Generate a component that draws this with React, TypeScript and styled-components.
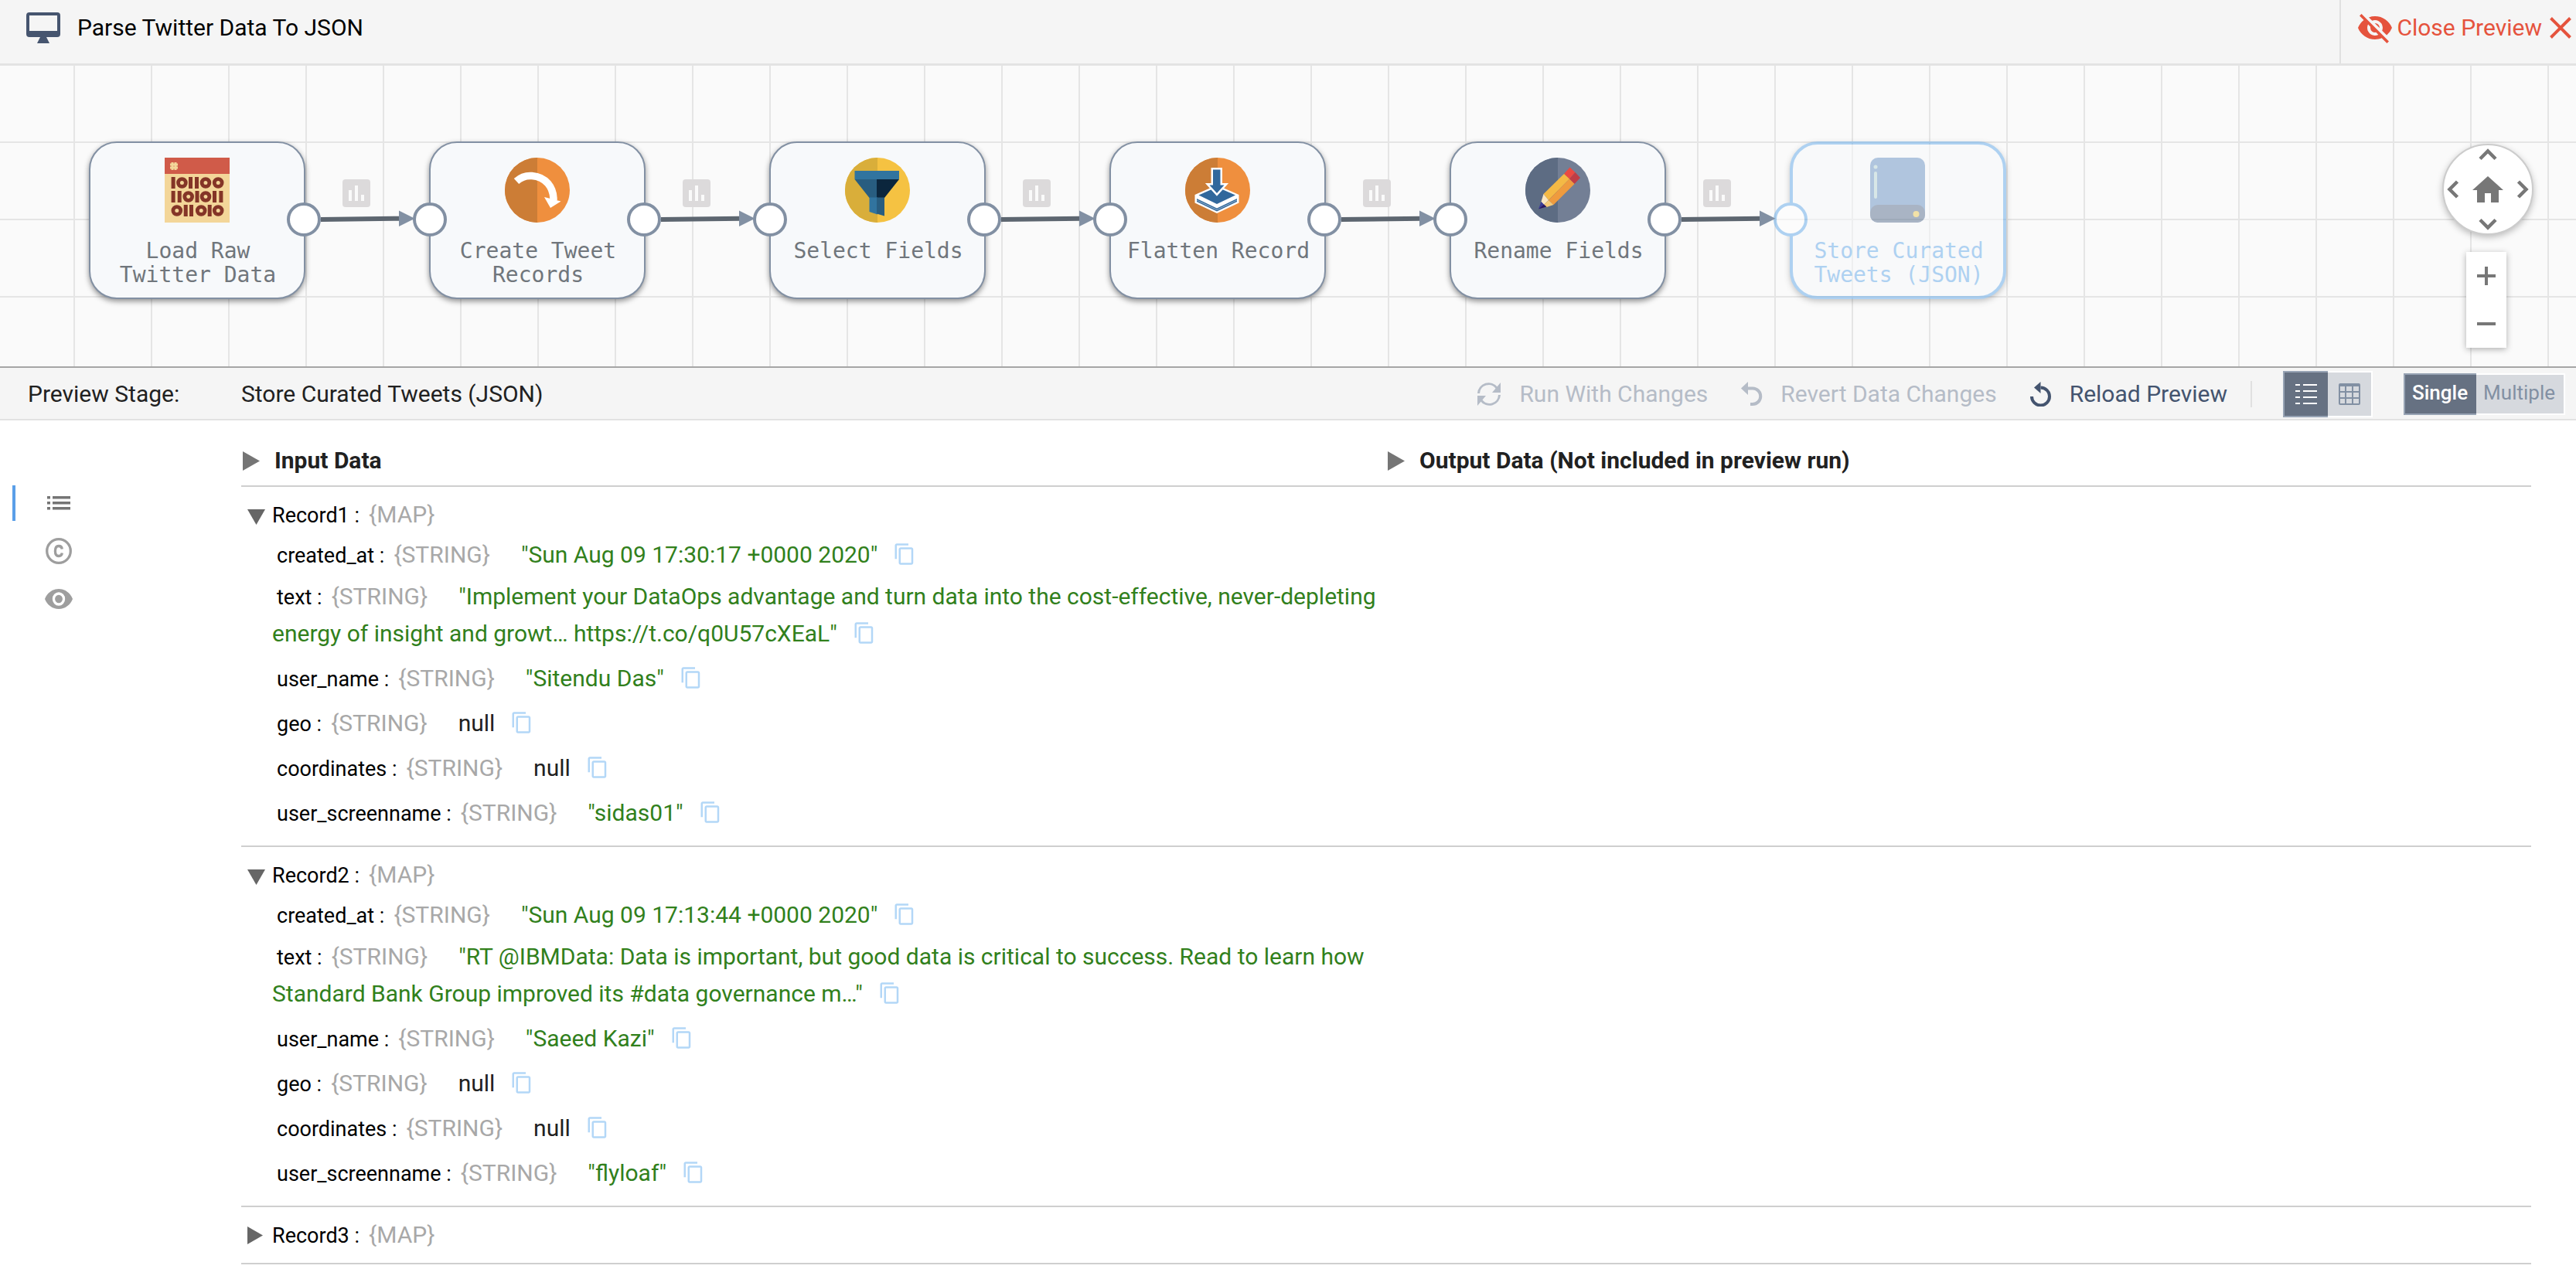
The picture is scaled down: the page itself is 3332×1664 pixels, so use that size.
import React, { useState } from "react";
import styled, { createGlobalStyle, css } from "styled-components";

const GlobalStyle = createGlobalStyle`
  *, *::before, *::after { box-sizing: border-box; }
  body {
    margin: 0;
    background: #fff;
    color: #212121;
    font-family: Roboto, "Liberation Sans", sans-serif;
    font-size: 30px;
    line-height: 40px;
  }
  button {
    margin: 0;
    padding: 0;
    border: 0;
    background: none;
    color: inherit;
    font: inherit;
    text-align: left;
    cursor: pointer;
  }
  svg { display: block; flex: none; }
`;

/* ---------- header ---------- */

const Header = styled.header`
  display: flex;
  justify-content: space-between;
  background: #f5f5f5;
  border-bottom: 3px solid #e3e3e3;
`;

const Title = styled.h1`
  display: flex;
  align-items: flex-start;
  gap: 22px;
  margin: 0;
  padding: 16px 0 26px 34px;
  color: #000;
  font-size: 30px;
  font-weight: 400;
`;

const CloseButton = styled.button`
  display: flex;
  align-items: flex-start;
  gap: 4px;
  padding: 16px 6px 26px 20px;
  border-left: 2px solid #e0e0e0;
  color: #e5533d;

  svg:first-child { margin: -4px 0; }
  svg:last-child { margin: 6px 0 0 6px; }
`;

/* ---------- canvas ---------- */

const Canvas = styled.section`
  position: relative;
  height: 389px;
  background-color: #fafafa;
  background-image:
    linear-gradient(to right, #e5e5e5 2px, transparent 2px),
    linear-gradient(to bottom, #e5e5e5 2px, transparent 2px);
  background-size: 100px 100px;
  background-position: 95px 98px;
  overflow: hidden;
`;

const StageNode = styled.div<{ $selected?: boolean }>`
  position: absolute;
  top: 98px;
  width: 280px;
  height: 204px;
  display: flex;
  flex-direction: column;
  align-items: center;
  gap: 21px;
  padding: ${(p) => (p.$selected ? "17px 10px 0" : "19px 12px 0")};
  border: ${(p) => (p.$selected ? "4px solid #64aaea" : "2px solid #8290a3")};
  border-radius: 36px;
  background: #f7f9fb;
  box-shadow: 0 3px 7px rgba(0, 0, 0, 0.42);
  color: ${(p) => (p.$selected ? "#64aaea" : "#70767c")};
  opacity: ${(p) => (p.$selected ? 0.5 : 1)};
`;

const StageLabel = styled.span`
  padding-left: 2px;
  font-family: "DejaVu Sans Mono", "Liberation Mono", monospace;
  font-size: 28px;
  line-height: 31px;
  text-align: center;
`;

const Port = styled.span<{ $side: "in" | "out"; $selected?: boolean }>`
  position: absolute;
  top: 50%;
  ${(p) => (p.$side === "in" ? css`left: ${p.$selected ? "-3px" : "-1px"};` : css`left: 100%;`)}
  width: 44px;
  height: 44px;
  margin: -23px 0 0 -22px;
  border: 4px solid ${(p) => (p.$selected ? "#64aaea" : "#8290a3")};
  border-radius: 50%;
  background: #fff;
`;

const Link = styled.svg`
  position: absolute;
  top: 147px;
`;

const Compass = styled.nav`
  position: absolute;
  top: 101px;
  right: 55px;
  width: 118px;
  height: 118px;
  display: grid;
  grid-template: 24px 1fr 24px / 24px 1fr 24px;
  place-items: center;
  border: 2px solid #ccc;
  border-radius: 50%;
  background: #fff;
  color: #777;
  box-shadow: 0 3px 9px rgba(0, 0, 0, 0.25);
`;

const CompassButton = styled.button<{ $area: string }>`
  grid-area: ${(p) => p.$area};
`;

const ZoomBox = styled.div`
  position: absolute;
  top: 241px;
  right: 90px;
  display: flex;
  flex-direction: column;
  background: #fff;
  color: #777;
  box-shadow: 0 2px 8px rgba(0, 0, 0, 0.3);
`;

const ZoomButton = styled.button`
  display: grid;
  place-items: center;
  width: 52px;
  height: 62px;
`;

/* ---------- preview bar ---------- */

const PreviewBar = styled.div`
  display: flex;
  align-items: center;
  height: 70px;
  padding: 2px 14px 0 0;
  background: #f5f5f5;
  border-top: 2px solid #a6a6a6;
  border-bottom: 2px solid #e2e2e2;
`;

const BarLabel = styled.span`
  width: 312px;
  padding-left: 36px;
`;

const BarActions = styled.div`
  display: flex;
  align-items: center;
  margin-left: auto;
`;

const Action = styled.button`
  display: flex;
  align-items: center;
  margin-right: 43px;
  gap: 23px;
  color: #44546f;

  &:disabled { color: #b5bcc7; cursor: default; }
`;

const BarDivider = styled.span`
  width: 2px;
  height: 34px;
  margin: 0 40px 0 -13px;
  background: #e0e0e0;
`;

const Toggle = styled.div`
  display: flex;
  & + & { margin-left: 40px; }
`;

const ToggleButton = styled.button<{ $active?: boolean; $text?: boolean }>`
  display: grid;
  place-items: center;
  height: ${(p) => (p.$text ? "54px" : "60px")};
  ${(p) => (p.$text ? css`padding: 0 11px 4px 9px;` : css`width: 58px;`)}
  border: 2px solid ${(p) => (p.$active ? "#97a3b4" : "#fff")};
  background: ${(p) => (p.$active ? "#667182" : "#d6d9de")};
  color: ${(p) => (p.$active ? "#fff" : "#8290a3")};
  font-size: 26px;
  font-weight: ${(p) => (p.$active ? 500 : 400)};

  &:first-child { border-right: 0; }
  &:last-child { border-left: 0; }
`;

/* ---------- preview body ---------- */

const PreviewBody = styled.main`
  display: flex;
  align-items: flex-start;
`;

const Rail = styled.nav`
  flex: none;
  display: flex;
  flex-direction: column;
  gap: 16px;
  width: 312px;
  padding: 84px 0 0 16px;
`;

const RailButton = styled.button<{ $active?: boolean }>`
  display: grid;
  place-items: center;
  width: 120px;
  height: 46px;
  padding-right: 4px;
  border-left: 4px solid ${(p) => (p.$active ? "#5a9fe8" : "transparent")};
  color: ${(p) => (p.$active ? "#757575" : "#9e9e9e")};
`;

const Data = styled.div`
  flex: 1;
  min-width: 0;
  margin-right: 58px;
  padding-top: 32px;
`;

const DataHeads = styled.div`
  display: grid;
  grid-template-columns: 1fr 1fr;
  padding-bottom: 12px;
  border-bottom: 2px solid #cfcfcf;
`;

const DataHead = styled.button`
  display: flex;
  align-items: center;
  gap: 19px;
  padding-left: 2px;
  font-weight: 700;

  svg { color: #757575; }
`;

const Record = styled.section`
  padding: 16px 0 10px;
  border-bottom: 2px solid #cfcfcf;
`;

const RecordHead = styled.button`
  display: flex;
  align-items: center;
  gap: 8px;
  margin-bottom: 6px;
  padding-left: 8px;

  svg { color: #666; }
`;

const Fields = styled.ul`
  width: 50%;
  margin: 0;
  padding: 0 0 0 40px;
  list-style: none;
  line-height: 44px;
`;

const Field = styled.li`
  margin-bottom: 10px;
  text-indent: 6px;
`;

const Name = styled.span`
  color: #000;
  font-size: 27px;
  line-height: 1;
`;

const Type = styled.span`
  margin-left: 12px;
  color: #a8a8a8;
`;

const Value = styled.span<{ $null: boolean }>`
  margin-left: 40px;
  color: ${(p) => (p.$null ? "#212121" : "#31801c")};
`;

const CopyButton = styled.button`
  display: inline-block;
  margin: 10px 0 0 20px;
  vertical-align: -4px;
  color: #b3d7f7;
  text-indent: 0;
`;

/* ---------- icons ---------- */

const MonitorIcon = () => (
  <svg width="44" height="40" viewBox="0 0 44 40" fill="#46556f">
    <path fillRule="evenodd" d="M4 0h36a4 4 0 0 1 4 4v24a4 4 0 0 1-4 4H4a4 4 0 0 1-4-4V4a4 4 0 0 1 4-4zM4 4v20h36V4z" />
    <path d="M18 32h8l4 8H14z" />
  </svg>
);

const EyeOffIcon = () => (
  <svg width="48" height="48" viewBox="0 0 24 24" fill="currentColor">
    <path d="M11.83 9L15 12.16V12a3 3 0 0 0-3-3zM7.53 9.8l1.55 1.55A3 3 0 0 0 9 12a3 3 0 0 0 3.65 2.92l1.55 1.55A5 5 0 0 1 7 12c0-.79.2-1.53.53-2.2zM2 4.27l2.28 2.28.45.45A11.8 11.8 0 0 0 1 12c1.73 4.39 6 7.5 11 7.5 1.55 0 3.03-.3 4.38-.84l.43.42L19.73 22 21 20.73 3.27 3zM12 7a5 5 0 0 1 4.64 6.82l2.93 2.93A11.8 11.8 0 0 0 23 12c-1.73-4.39-6-7.5-11-7.5-1.4 0-2.74.25-4 .7l2.17 2.15A5 5 0 0 1 12 7z" />
  </svg>
);

const CrossIcon = () => (
  <svg width="28" height="28" viewBox="0 0 28 28" stroke="currentColor" strokeWidth="4">
    <path d="M1.5 1.5l25 25M26.5 1.5l-25 25" />
  </svg>
);

const BinaryIcon = () => {
  const ones = [
    [8.6, 25], [31, 25], [39, 25],
    [8.6, 43], [16.7, 43], [39.5, 43], [62, 43], [70.4, 43],
    [24.7, 61], [32, 61], [55.7, 61],
  ];
  const zeros = [
    [22.4, 32.5], [53, 32.5], [69.2, 32.5],
    [30.7, 50.5], [53, 50.5],
    [15.8, 68.5], [47.2, 68.5], [69.2, 68.5],
  ];
  return (
    <svg width="84" height="84" viewBox="0 0 84 84">
      <rect width="84" height="84" fill="#f3d699" />
      <rect width="84" height="21" fill="#d05b49" />
      <path d="M10 6v10M14 6v10M7 9h10M7 13h10" stroke="#f3d699" strokeWidth="3" />
      {ones.map(([x, y]) => (
        <rect key={`${x}-${y}`} x={x} y={y} width="5" height="15" fill="#843527" />
      ))}
      {zeros.map(([x, y]) => (
        <circle key={`${x}-${y}`} cx={x} cy={y} r="4.9" fill="none" stroke="#843527" strokeWidth="4.8" />
      ))}
    </svg>
  );
};

const Disc = ({ left, right, children }: { left: string; right: string; children: React.ReactNode }) => (
  <svg width="84" height="84" viewBox="0 0 84 84">
    <circle cx="42" cy="42" r="42" fill={right} />
    <path d="M42 0a42 42 0 0 0 0 84z" fill={left} />
    {children}
  </svg>
);

const CreateIcon = () => (
  <Disc left="#cc7d36" right="#ef8f3e">
    <path d="M15 30.500C21 25 28 23 35 23.500C53 25 63 38 63 55" fill="none" stroke="#fff" strokeWidth="9.500" />
    <path d="M51 51l21.500 5.500L59 65z" fill="#fff" />
  </Disc>
);

const FunnelIcon = () => (
  <Disc left="#d9ae3a" right="#f5c242">
    <path d="M12.500 17h57.500v11H12.500z" fill="#31749f" />
    <path d="M12.500 28H42v24H31.500z" fill="#285d80" />
    <path d="M41 28h29L51 52H41z" fill="#0b263d" />
    <path d="M31.500 51.500H42v22l-10.500-3.500z" fill="#31749f" />
    <path d="M41 51.500h10v24l-10-3z" fill="#285d80" />
  </Disc>
);

const FlattenIcon = () => (
  <Disc left="#cc7d36" right="#ef8f3e">
    <path d="M41 35.500L12.500 48v10.500L41 72l28.500-13.500V48z" fill="#fff" />
    <path d="M17.500 48.500L41 38l24 10.500L41 60z" fill="#31689c" />
    <path d="M15 53l26 12.500L67 53v4L41 69.500 15 57z" fill="#31689c" />
    <path d="M15 55l26 12.500L67 55" fill="none" stroke="#fff" strokeWidth="1" opacity=".5" />
    <path d="M36 15.500h9.500v20h5L41 46l-9.500-10.500H36z" fill="#31689c" stroke="#fff" strokeWidth="5" paintOrder="stroke" />
  </Disc>
);

const PencilIcon = () => (
  <Disc left="#5d6c83" right="#737f95">
    <path d="M50 21l7.500-8.500L64.500 19 57 27.500z" fill="#ea4a42" />
    <path d="M64.500 19L71 26l-7.500 8-6.500-6.500z" fill="#bf3d45" />
    <path d="M50 21l7 6.500L30 55l-6.500-8z" fill="#f4b945" />
    <path d="M57 27.500l6.500 6.500-27 27L30 55z" fill="#ef9b3e" />
    <path d="M23.500 47L30 55l-6 6-3.500-4z" fill="#fbe6c0" />
    <path d="M30 55l6.500 6-9 3-3.500-3z" fill="#f6ca78" />
    <path d="M20.500 57l3.500 3.500-7 6z" fill="#3b3b98" />
    <path d="M24 60.500l3.500 3-10.500 3z" fill="#2a1763" />
  </Disc>
);

const DiskIcon = () => (
  <svg width="72" height="84" viewBox="0 0 72 84">
    <rect width="71" height="84" rx="10" fill="#6892c4" />
    <path d="M0 71a10 10 0 0 1 10-10h51a10 10 0 0 1 10 10v3a10 10 0 0 1-10 10H10A10 10 0 0 1 0 74z" fill="#5a708f" />
    <rect x="5" y="18" width="4" height="35" rx="2" fill="#b8d6d6" />
    <circle cx="7" cy="12" r="2.500" fill="#b8d6d6" />
    <circle cx="59.500" cy="73" r="4" fill="#ecca56" />
  </svg>
);

const Chevron = ({ turn = 0 }: { turn?: number }) => (
  <svg width="24" height="24" viewBox="0 0 24 24" fill="none" stroke="currentColor" strokeWidth="4.500">
    <path d="M2 17.500l10-10 10 10" transform={`rotate(${turn} 12 12)`} />
  </svg>
);

const HomeIcon = () => (
  <svg width="40" height="34" viewBox="2 3 20 17" fill="currentColor">
    <path d="M10 20v-6h4v6h5v-8h3L12 3 2 12h3v8z" />
  </svg>
);

const PlusMinusIcon = ({ plus }: { plus?: boolean }) => (
  <svg width="24" height="24" viewBox="0 0 24 24" stroke="currentColor" strokeWidth="4">
    <path d={plus ? "M0 12h24M12 0v24" : "M0 12h24"} />
  </svg>
);

const RefreshIcon = () => (
  <svg width="32" height="30" viewBox="0 0 32 30" fill="none" stroke="currentColor" strokeWidth="3">
    <path d="M2.500 14A13 13 0 0 1 26 7M29.500 16A13 13 0 0 1 6 23" />
    <path d="M31 0v13H20zM1 30V17h11z" fill="currentColor" stroke="none" />
  </svg>
);

const UndoIcon = () => (
  <svg width="28" height="32" viewBox="0 0 28 32" fill="none" stroke="currentColor" strokeWidth="4">
    <path d="M7 8.500h8a10.200 10.200 0 0 1 0 20.500h-3" />
    <path d="M0 8.500L9 0v17z" fill="currentColor" stroke="none" />
  </svg>
);

const ReloadIcon = () => (
  <svg width="28" height="32" viewBox="0 0 28 32" fill="none" stroke="currentColor" strokeWidth="4">
    <path d="M13.500 7.500A11.500 11.500 0 1 1 2 19" />
    <path d="M5 7.500L13.500 0v15z" fill="currentColor" stroke="none" />
  </svg>
);

const ListIcon = () => (
  <svg width="28" height="26" viewBox="0 0 28 26" fill="currentColor">
    {[0, 8, 16, 24].map((y) => (
      <path key={y} d={`M0 ${y}h6v2H0zM10 ${y}h18v2H10z`} />
    ))}
  </svg>
);

const GridIcon = () => (
  <svg width="28" height="28" viewBox="0 0 28 28" fill="none" stroke="currentColor" strokeWidth="2">
    <rect x="1" y="1" width="26" height="26" rx="1" />
    <path d="M1 3h26M1 11h26M1 19h26M9 3v24M18 3v24" />
  </svg>
);

const BulletsIcon = () => (
  <svg width="30" height="18" viewBox="0 0 30 18" fill="currentColor">
    {[0, 7, 14].map((y) => (
      <path key={y} d={`M0 ${y}h4v3.500H0zM7 ${y}h23v3.500H7z`} />
    ))}
  </svg>
);

const CopyrightIcon = () => (
  <svg width="34" height="34" viewBox="0 0 34 34" fill="none" stroke="currentColor" strokeWidth="3.300">
    <circle cx="17" cy="17" r="15.300" />
    <path d="M21.300 14.500c-.3-2.500-1.800-4-4.300-4-3 0-4.600 2.500-4.600 6.500s1.600 6.500 4.600 6.500c2.500 0 4-1.500 4.300-4" />
  </svg>
);

const EyeIcon = () => (
  <svg width="36" height="26" viewBox="1 4.500 22 15" fill="currentColor" preserveAspectRatio="none">
    <path d="M12 4.500C7 4.500 2.730 7.610 1 12c1.730 4.390 6 7.500 11 7.500s9.270-3.110 11-7.500c-1.730-4.390-6-7.500-11-7.500zM12 17a5 5 0 1 1 0-10 5 5 0 0 1 0 10zm0-8a3 3 0 1 0 0 6 3 3 0 0 0 0-6z" />
  </svg>
);

const CopyIcon = () => (
  <svg width="30" height="30" viewBox="0 0 24 24" fill="currentColor">
    <path d="M16 1H4c-1.100 0-2 .9-2 2v14h2V3h12V1zm3 4H8c-1.100 0-2 .9-2 2v14c0 1.100.9 2 2 2h11c1.100 0 2-.9 2-2V7c0-1.100-.9-2-2-2zm0 16H8V7h11v14z" />
  </svg>
);

const HeadArrow = () => (
  <svg width="22" height="25" viewBox="0 0 22 25" fill="currentColor">
    <path d="M0 0l22 12.500L0 25z" />
  </svg>
);

const RecordArrow = ({ open }: { open: boolean }) => (
  <svg width="24" height="26" viewBox="0 0 24 26" fill="currentColor">
    <path d={open ? "M0 6h23L11.500 26z" : "M0 2l20 11.500L0 25z"} />
  </svg>
);

/* ---------- data ---------- */

const FIRST_STAGE_X = 115;
const STAGE_PITCH = 440;

const stages = [
  { label: "Load Raw Twitter Data", icon: <BinaryIcon /> },
  { label: "Create Tweet Records", icon: <CreateIcon /> },
  { label: "Select Fields", icon: <FunnelIcon /> },
  { label: "Flatten Record", icon: <FlattenIcon /> },
  { label: "Rename Fields", icon: <PencilIcon /> },
  { label: "Store Curated Tweets (JSON)", icon: <DiskIcon /> },
];

type FieldData = [name: string, value: string | null];

const records: { name: string; fields: FieldData[] }[] = [
  {
    name: "Record1",
    fields: [
      ["created_at", "Sun Aug 09 17:30:17 +0000 2020"],
      ["text", "Implement your DataOps advantage and turn data into the cost-effective, never-depleting energy of insight and growt… https://t.co/q0U57cXEaL"],
      ["user_name", "Sitendu Das"],
      ["geo", null],
      ["coordinates", null],
      ["user_screenname", "sidas01"],
    ],
  },
  {
    name: "Record2",
    fields: [
      ["created_at", "Sun Aug 09 17:13:44 +0000 2020"],
      ["text", "RT @IBMData: Data is important, but good data is critical to success. Read to learn how Standard Bank Group improved its #data governance m…"],
      ["user_name", "Saeed Kazi"],
      ["geo", null],
      ["coordinates", null],
      ["user_screenname", "flyloaf"],
    ],
  },
  { name: "Record3", fields: [] },
];

/* ---------- parts ---------- */

const StageLink = ({ x }: { x: number }) => (
  <Link width="164" height="64" viewBox="0 0 164 64" style={{ left: x }}>
    <rect x="50" y="0" width="36" height="36" rx="4" fill="#dcdadb" />
    <path d="M58 14h4v14h-4zM66 8h4v20h-4zM74 20h4v8h-4z" fill="#fafafa" />
    <path d="M22 52l103-1.300" stroke="#5d6670" strokeWidth="6" />
    <path d="M123 40.500l20.500 10.300L123 61z" fill="#8290a3" />
  </Link>
);

const RecordView = ({ name, fields }: { name: string; fields: FieldData[] }) => {
  const [open, setOpen] = useState(fields.length > 0);
  return (
    <Record>
      <RecordHead aria-expanded={open} onClick={() => setOpen(!open)}>
        <RecordArrow open={open} />
        <span>
          <Name>{name} :</Name>
          <Type>{"{MAP}"}</Type>
        </span>
      </RecordHead>
      {open && (
        <Fields>
          {fields.map(([field, value]) => (
            <Field key={field}>
              <Name>{field} :</Name>
              <Type>{"{STRING}"}</Type>
              <Value $null={value === null}>{value === null ? "null" : `"${value}"`}</Value>
              <CopyButton aria-label={`Copy ${field}`}>
                <CopyIcon />
              </CopyButton>
            </Field>
          ))}
        </Fields>
      )}
    </Record>
  );
};

export default function App() {
  return (
    <>
      <GlobalStyle />
      <Header>
        <Title>
          <MonitorIcon />
          Parse Twitter Data To JSON
        </Title>
        <CloseButton>
          <EyeOffIcon />
          <span>Close Preview</span>
          <CrossIcon />
        </CloseButton>
      </Header>

      <Canvas>
        {stages.map(({ label, icon }, i) => {
          const last = i === stages.length - 1;
          return (
            <StageNode key={label} $selected={last} style={{ left: FIRST_STAGE_X + i * STAGE_PITCH }}>
              {icon}
              <StageLabel>{label}</StageLabel>
              {i > 0 && <Port $side="in" $selected={last} />}
              {!last && <Port $side="out" />}
            </StageNode>
          );
        })}
        {stages.slice(1).map(({ label }, i) => (
          <StageLink key={label} x={FIRST_STAGE_X + i * STAGE_PITCH + 278} />
        ))}
        <Compass aria-label="Pan">
          <CompassButton $area="1 / 2" aria-label="Up"><Chevron /></CompassButton>
          <CompassButton $area="2 / 1" aria-label="Left"><Chevron turn={-90} /></CompassButton>
          <CompassButton $area="2 / 2" aria-label="Home"><HomeIcon /></CompassButton>
          <CompassButton $area="2 / 3" aria-label="Right"><Chevron turn={90} /></CompassButton>
          <CompassButton $area="3 / 2" aria-label="Down"><Chevron turn={180} /></CompassButton>
        </Compass>
        <ZoomBox>
          <ZoomButton aria-label="Zoom in"><PlusMinusIcon plus /></ZoomButton>
          <ZoomButton aria-label="Zoom out"><PlusMinusIcon /></ZoomButton>
        </ZoomBox>
      </Canvas>

      <PreviewBar>
        <BarLabel>Preview Stage:</BarLabel>
        <span>Store Curated Tweets (JSON)</span>
        <BarActions>
          <Action disabled><RefreshIcon />Run With Changes</Action>
          <Action disabled><UndoIcon />Revert Data Changes</Action>
          <Action><ReloadIcon />Reload Preview</Action>
          <BarDivider />
          <Toggle>
            <ToggleButton $active aria-label="List view"><ListIcon /></ToggleButton>
            <ToggleButton aria-label="Table view"><GridIcon /></ToggleButton>
          </Toggle>
          <Toggle>
            <ToggleButton $active $text>Single</ToggleButton>
            <ToggleButton $text>Multiple</ToggleButton>
          </Toggle>
        </BarActions>
      </PreviewBar>

      <PreviewBody>
        <Rail>
          <RailButton $active aria-label="Records"><BulletsIcon /></RailButton>
          <RailButton aria-label="Configuration"><CopyrightIcon /></RailButton>
          <RailButton aria-label="Visibility"><EyeIcon /></RailButton>
        </Rail>
        <Data>
          <DataHeads>
            <DataHead><HeadArrow />Input Data</DataHead>
            <DataHead><HeadArrow />Output Data (Not included in preview run)</DataHead>
          </DataHeads>
          {records.map((r) => (
            <RecordView key={r.name} {...r} />
          ))}
        </Data>
      </PreviewBody>
    </>
  );
}
